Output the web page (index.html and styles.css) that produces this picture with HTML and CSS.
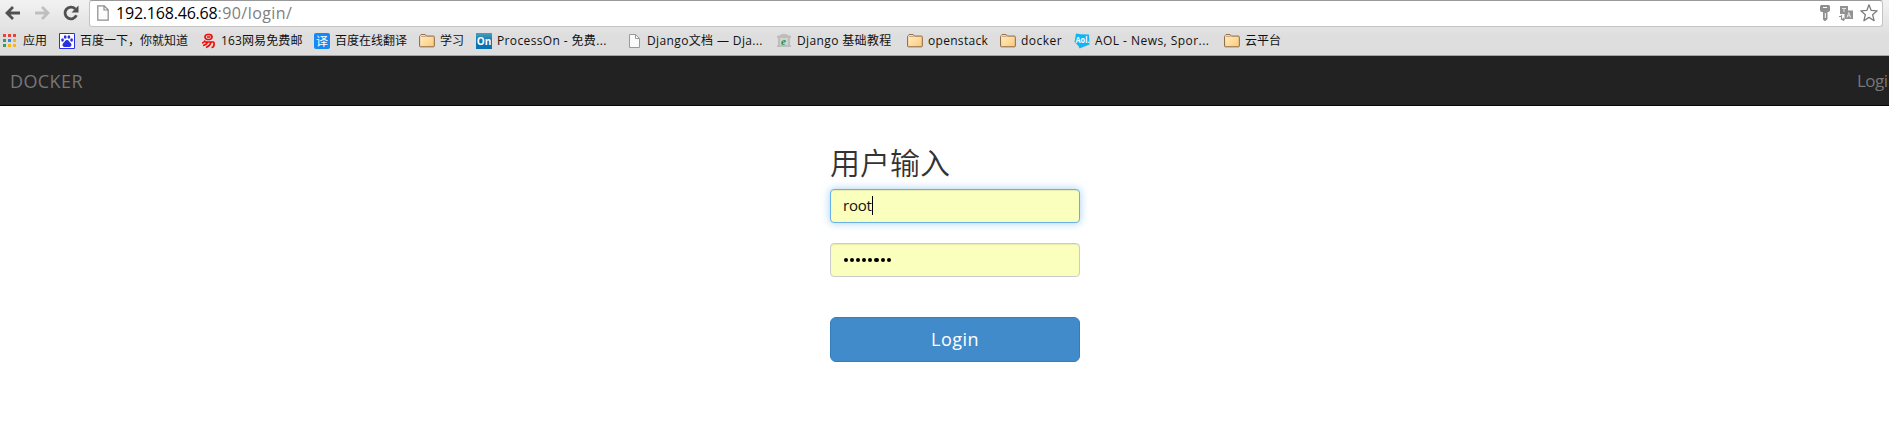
FILE: index.html
```html
<!DOCTYPE html>
<html lang="zh-CN">
<head>
<meta charset="utf-8">
<title>Login</title>
<link rel="stylesheet" href="styles.css">
</head>
<body>
<svg class="defs" width="0" height="0">
  <defs>
    <linearGradient id="fold" x1="0" y1="0" x2="1" y2="1"><stop offset="0" stop-color="#fff0cc"/><stop offset="1" stop-color="#fdc976"/></linearGradient>
    <linearGradient id="on" x1="0" y1="0" x2="0" y2="1"><stop offset="0" stop-color="#4d9fbd"/><stop offset=".5" stop-color="#0b76b0"/><stop offset="1" stop-color="#0873b4"/></linearGradient>
    <symbol id="folder" viewBox="0 0 16 16"><path d="M.6 13V3.5q0-.6.6-.9L2 1.6h4.2l1.2 1.5h6.9q1 0 1 1V13q0 .8-.8.8H1.4q-.8 0-.8-.8z" fill="url(#fold)" stroke="#8b6642"/><path d="M2 3.6h4.6" stroke="#c9a57a"/></symbol>
    <symbol id="page" viewBox="0 0 16 16"><path d="M3.5 1.5h6l4 4v9h-10z" fill="#fafafa" stroke="#999"/><path d="M9.5 1.5v4h4" fill="none" stroke="#999"/></symbol>
  </defs>
</svg>
<header class="chrome">
  <div class="toolbar">
    <svg class="nav back" viewBox="0 0 16 16"><path d="M15 8H2.5M8 2L2 8l6 6"/></svg>
    <svg class="nav forward" viewBox="0 0 16 16"><path d="M1 8h12.5M8 2l6 6-6 6"/></svg>
    <svg class="nav reload" viewBox="0 0 16 16"><path d="M13.4 10.2A5.9 5.9 0 1 1 12.3 4"/><path class="head" d="M15.5 .5v7H8.5z"/></svg>
    <div class="address">
      <svg class="doc" viewBox="0 0 12 16"><path d="M.8.8h6.4l4 4v10.4H.8zM7 .8v4.2h4.2" fill="#fcfcfc" stroke="#8c8c8c" stroke-width="1.2"/></svg>
      <span class="url"><span class="host">192.168.46.68</span>:90/login/</span>
      <span class="actions">
        <svg width="10" height="16" viewBox="0 0 10 16"><path fill="#8f8f8f" fill-rule="evenodd" d="M1.500 0h7Q10 0 10 1.500V5q0 2-2 2H7.500v7l-2 2h-1l-1.500-1.500V7H2Q0 7 0 5V1.500Q0 0 1.500 0zM3 2v1h4V2zM4.800 8v5h1V8z"/></svg>
        <svg width="14" height="15" viewBox="0 0 14 15"><path fill="#929292" d="M1 0h8v4.500h5V13H5.500V8H1z"/><path stroke="#e6e6e6" fill="none" d="M3 2.500h4M5 2.500V6M8 11.500l1.800-5 1.800 5M8.500 9.800h2.600"/><path stroke="#929292" fill="none" stroke-width="1.200" d="M0 10.500h2M2.500 9v4.500H5M3.800 12l1.500 1.500L3.800 15"/></svg>
        <svg width="18" height="18" viewBox="0 0 18 18"><path fill="#fff" stroke="#7d7d7d" stroke-width="1.3" stroke-linejoin="round" d="M9 .8l2.2 5.6 6 .4-4.6 3.9 1.5 6L9 13.4l-5.1 3.3 1.5-6L.8 6.8l6-.4z"/></svg>
      </span>
    </div>
  </div>
  <nav class="bookmarks">
    <a><svg viewBox="0 0 16 16"><path fill="#ea4335" d="M1 1h3v3H1zM6 1h3v3H6zM11 1h3v3h-3z"/><path fill="#31a05b" d="M1 6h3v3H1zM1 11h3v3H1z"/><path fill="#2b8bf2" d="M6 6h3v3H6z"/><path fill="#f5b420" d="M11 6h3v3h-3zM6 11h3v3H6zM11 11h3v3h-3z"/></svg><span>应用</span></a>
    <a><svg viewBox="0 0 16 16"><path fill="#fff" stroke="#2a32df" d="M.5.5h15v15H.5z"/><g fill="#2a32df"><ellipse cx="3.5" cy="7" rx="1.4" ry="1.8"/><ellipse cx="6.2" cy="4" rx="1.4" ry="1.8"/><ellipse cx="9.9" cy="4" rx="1.4" ry="1.8"/><ellipse cx="12.6" cy="7" rx="1.4" ry="1.8"/><path d="M8 7c2 0 2 1.7 3.6 3 1.5 1.300 1 3.900-1.200 3.900H5.500C3.300 13.900 2.900 11.300 4.400 10 6 8.700 6 7 8 7z"/></g></svg><span>百度一下，你就知道</span></a>
    <a><svg viewBox="0 0 16 16"><g fill="none" stroke="#f00b0b" stroke-width="1.700"><rect x="5" y="1.500" width="7" height="5" rx="2.500"/><path d="M7 4h3.500M5 7.500Q4 10 2 10M5 9h8q1.500 0 1 3-.3 2.500-2.500 2.500M7.500 9q-1 3-4.500 3.500M11 9q-1 4-5 5.500"/></g></svg><span class="mail">163网易免费邮</span></a>
    <a><svg viewBox="0 0 16 16"><rect width="16" height="16" rx="2" fill="#1689f5"/><text class="yi" x="2" y="12.500">译</text></svg><span>百度在线翻译</span></a>
    <a><svg><use href="#folder"/></svg><span>学习</span></a>
    <a><svg viewBox="0 0 16 16"><path fill="url(#on)" d="M0 0h16v16H0z"/><text class="on" x=".8" y="12" textLength="14.500" lengthAdjust="spacingAndGlyphs">On</text></svg><span class="process">ProcessOn - 免费...</span></a>
    <a><svg><use href="#page"/></svg><span class="docs">Django文档 — Dja...</span></a>
    <a><svg viewBox="0 0 16 16"><path fill="#bdbdbd" d="M1 3l2-.5Q8-1 13 2.500l2 .5v2h-1v7h1v2H1v-2h1V5H1z"/><path fill="#d2d2d2" d="M4 5h8v7H4z"/><text class="e" x="5" y="11.500">e</text></svg><span class="basic">Django 基础教程</span></a>
    <a><svg><use href="#folder"/></svg><span class="stack">openstack</span></a>
    <a><svg><use href="#folder"/></svg><span class="dock">docker</span></a>
    <a><svg viewBox="0 0 16 16"><path fill="#12b4f5" d="M2 .5l5 .8 8 .2.500 10-10 4L4.500 13 .5 9z"/><text class="aol" x="1.500" y="10" textLength="14" lengthAdjust="spacingAndGlyphs">Aol.</text></svg><span class="news">AOL - News, Spor...</span></a>
    <a><svg><use href="#folder"/></svg><span>云平台</span></a>
  </nav>
</header>
<div class="navbar"><a class="brand">DOCKER</a><a class="navlink">Logi</a></div>
<main>
  <form class="signin">
    <h2>用户输入</h2>
    <div class="field focused"><span class="value">root</span><i class="caret"></i></div>
    <div class="field"><span class="dots"><i></i><i></i><i></i><i></i><i></i><i></i><i></i><i></i></span></div>
    <button type="button" class="submit">Login</button>
  </form>
</main>
</body>
</html>
```
FILE: styles.css
```css
* { box-sizing: border-box; }
body { margin: 0; height: 445px; overflow: hidden; background: #fff; color: #333; font-family: "Open Sans", "Noto Sans CJK SC", sans-serif; }
.defs { display: block; height: 0; }
.chrome { height: 56px; background: linear-gradient(#f2f2f2, #dedede 36px, #dedede); border-bottom: 1px solid #a3a3a3; }
.toolbar { height: 27px; display: flex; padding-left: 5px; }
.nav { width: 16px; height: 16px; margin-top: 5px; fill: none; stroke: #505050; stroke-width: 2.8; flex: none; }
.forward { margin-left: 13px; stroke: #bfbfbf; }
.reload { margin-left: 13px; }
.reload .head { fill: #505050; stroke: none; }
.address { width: 1794px; height: 27px; margin-left: 10px; background: #fff; border: 1px solid #c3c3c3; border-top: 1px solid #999; border-radius: 3px; display: flex; align-items: center; padding: 0 4px 1px 7px; flex: none; }
.doc { width: 12px; height: 16px; }
.url { margin-left: 7px; font: 16px/24px "Open Sans", sans-serif; letter-spacing: .45px; color: #808080; white-space: nowrap; }
.host { color: #000; letter-spacing: -.2px; }
.actions { margin-left: auto; display: flex; align-items: center; gap: 7px; }
.actions svg:first-child { margin-right: 2px; }
.bookmarks { height: 28px; padding-left: 2px; display: grid; grid-template-columns: 57px 141px 114px 105px 57px 150px 150px 131px 93px 74px 150px 100px; align-items: center; }
.bookmarks a { display: flex; align-items: center; gap: 5px; font: 12px/18px "Open Sans", "Noto Sans CJK SC", sans-serif; color: #111; white-space: nowrap; }
.bookmarks svg { width: 16px; height: 16px; flex: none; }
.mail { letter-spacing: .12px; }
.process, .docs, .basic { letter-spacing: .37px; }
.stack { letter-spacing: .3px; }
.dock { letter-spacing: .5px; }
.news { letter-spacing: .45px; }
.yi { font: 12px "Noto Sans CJK SC", sans-serif; fill: #fff; }
.on { font: bold 11px "Open Sans", sans-serif; fill: #fff; }
.e { font: italic bold 11px "Liberation Serif", serif; fill: #15923b; }
.aol { font: bold 8px "Open Sans", sans-serif; fill: #fff; }
.navbar { height: 50px; background: #222; border-bottom: 1px solid #080808; display: flex; justify-content: space-between; padding-left: 10px; font-size: 18px; line-height: 50px; color: #777; }
.brand { letter-spacing: .4px; }
.navlink { width: 32px; font-size: 17px; letter-spacing: -.5px; white-space: nowrap; }
.signin { width: 250px; margin: 0 0 0 830px; padding-top: 39px; }
h2 { margin: 0 0 11px; font: 350 30px/33px "Noto Sans CJK SC", sans-serif; }
.field { height: 34px; margin-bottom: 20px; padding: 0 12px; border: 1px solid #ccc; border-radius: 4px; background: #faffbd; box-shadow: inset 0 1px 1px rgba(0,0,0,.075); display: flex; align-items: center; color: #111; font-size: 15px; }
.value { padding-bottom: 2px; letter-spacing: -.25px; }
.focused { border-color: #66afe9; box-shadow: inset 0 1px 1px rgba(0,0,0,.075), 0 0 8px rgba(102,175,233,.6); }
.caret { width: 1px; height: 19px; margin-bottom: 2px; background: #000; }
.dots { display: flex; gap: 2px; padding-left: 1px; }
.dots i { width: 4.1px; height: 4.1px; border-radius: 50%; background: #000; }
.submit { display: block; width: 250px; height: 45px; margin-top: 40px; padding: 0 0 2px; border: 1px solid #357ebd; border-radius: 6px; background: #428bca; color: #fff; font: 18px/24px "Open Sans", sans-serif; letter-spacing: .45px; }
```
